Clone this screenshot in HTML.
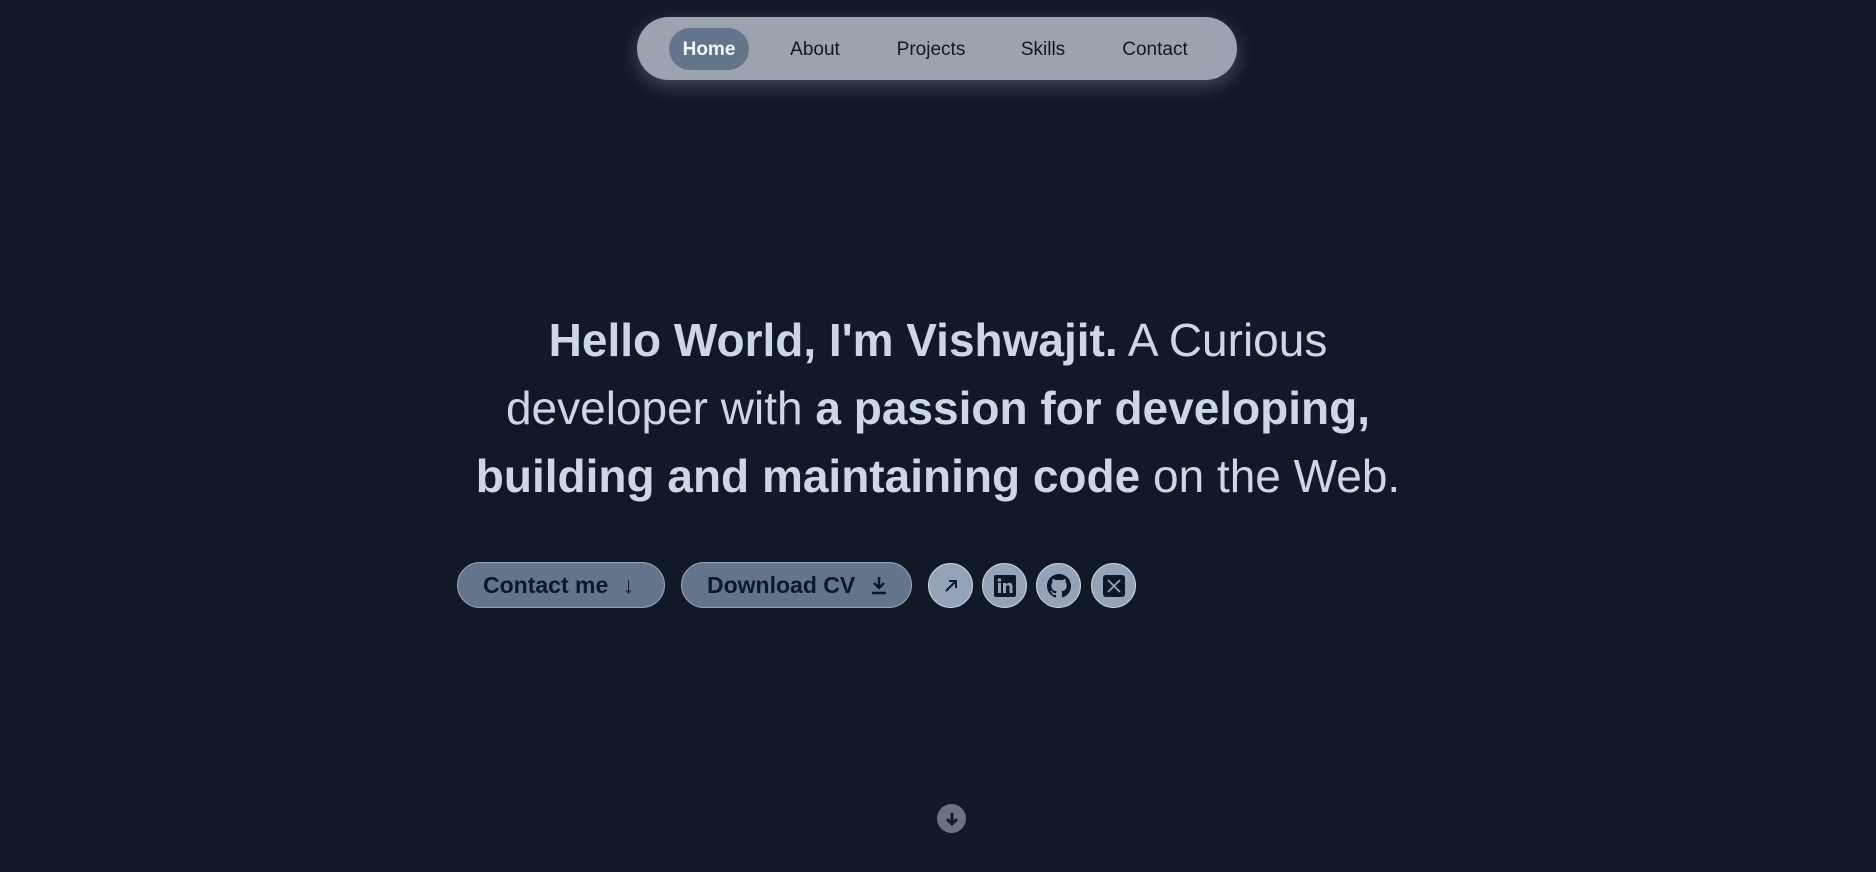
<!DOCTYPE html>
<html><head><style>
*{margin:0;padding:0;box-sizing:border-box}
body{width:1876px;height:872px;background:#111827;font-family:"Liberation Sans",sans-serif;position:relative;overflow:hidden}
nav{position:absolute;left:637px;top:17px;width:600px;height:63px;border-radius:32px;background:#9ca3af;box-shadow:0 6px 18px rgba(160,170,190,.35)}
nav span{position:absolute;top:1px;line-height:63px;font-size:19px;color:#111827;transform:translateX(-50%)}
nav .home{top:11px;height:42px;line-height:43px;width:80px;text-align:center;border-radius:21px;background:#64748b;color:#f1f5f9;font-weight:bold;transform:none;left:32px}
h1{position:absolute;left:338px;width:1200px;top:306px;text-align:center;font-size:46px;line-height:68px;color:#cdd6e4;font-weight:normal;white-space:nowrap}
h1 b{font-weight:bold}
.btn{position:absolute;top:562px;height:46px;border-radius:23px;background:#64748b;border:1.5px solid #94a3b8;color:#0f172a;font-size:23px;font-weight:bold;line-height:44px;padding-left:25px}
.c{position:absolute;top:563px;width:45px;height:45px;border-radius:50%;background:#94a3b8;border:1.5px solid #cbd5e1;display:flex;align-items:center;justify-content:center}
.down{position:absolute;left:937px;top:804px;width:29px;height:29px;border-radius:50%;background:#6b7280;display:flex;align-items:center;justify-content:center}
</style></head><body>
<nav>
<span class="home">Home</span>
<span style="left:178px">About</span>
<span style="left:294px">Projects</span>
<span style="left:406px">Skills</span>
<span style="left:518px">Contact</span>
</nav>
<h1><b>Hello World, I'm Vishwajit.</b> A Curious<br>developer with <b>a passion for developing,</b><br><b>building and maintaining code</b> on the Web.</h1>
<div class="btn" style="left:457px;width:208px">Contact me <span style="font-weight:normal;margin-left:8px">↓</span></div>
<div class="btn" style="left:681px;width:231px">Download CV <svg width="18" height="20" viewBox="0 0 18 20" style="margin-left:8px;vertical-align:-2px"><path d="M9 2v11M4 8l5 5 5-5M2 18h14" stroke="#0f172a" stroke-width="2.5" fill="none"/></svg></div>
<div class="c" style="left:928px"><svg width="16" height="16" viewBox="0 0 16 16"><path d="M3 13L13 3M6 3h7v7" stroke="#0f172a" stroke-width="2" fill="none"/></svg></div>
<div class="c" style="left:982px"><svg width="22" height="22" viewBox="0 0 22 22"><rect width="22" height="22" rx="2" fill="#0f172a"/><rect x="4" y="8" width="3" height="10" fill="#94a3b8"/><circle cx="5.5" cy="5" r="1.8" fill="#94a3b8"/><path d="M9 8h3v1.5c.7-1.2 2-1.8 3.3-1.8 2.3 0 3.2 1.5 3.2 4V18h-3v-5.5c0-1.3-.4-2.2-1.6-2.2S12 11.2 12 12.5V18H9z" fill="#94a3b8"/></svg></div>
<div class="c" style="left:1036px"><svg width="24" height="24" viewBox="0 0 16 16"><path fill="#0f172a" d="M8 0C3.58 0 0 3.58 0 8c0 3.54 2.29 6.53 5.47 7.59.4.07.55-.17.55-.38v-1.34c-2.23.49-2.7-1.07-2.7-1.07-.36-.92-.89-1.17-.89-1.17-.73-.5.06-.49.06-.49.8.06 1.23.83 1.23.83.71 1.22 1.87.87 2.33.66.07-.52.28-.87.5-1.07-1.78-.2-3.65-.89-3.65-3.95 0-.87.31-1.59.82-2.15-.08-.2-.36-1.02.08-2.12 0 0 .67-.21 2.2.82a7.6 7.6 0 0 1 4 0c1.53-1.04 2.2-.82 2.2-.82.44 1.1.16 1.92.08 2.12.51.56.82 1.27.82 2.15 0 3.07-1.87 3.75-3.65 3.95.29.25.54.73.54 1.48v2.2c0 .21.15.46.55.38A8 8 0 0 0 16 8c0-4.42-3.58-8-8-8z"/></svg></div>
<div class="c" style="left:1091px"><svg width="22" height="22" viewBox="0 0 22 22"><rect width="22" height="22" rx="3" fill="#0f172a"/><path d="M5 5l12 12M17 5L5 17" stroke="#94a3b8" stroke-width="1.8"/></svg></div>
<div class="down"><svg width="16" height="16" viewBox="0 0 16 16"><path d="M8 2v11M3 8l5 5 5-5" stroke="#111827" stroke-width="3" fill="none"/></svg></div>
</body></html>
